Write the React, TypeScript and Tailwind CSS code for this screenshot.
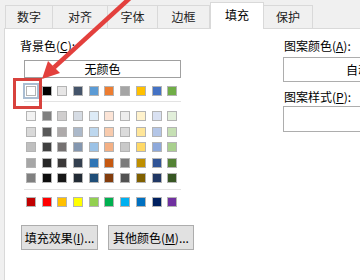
import React from "react";

const font = "font-['Microsoft_YaHei','Noto_Sans_CJK_SC',sans-serif]";

const theme = ["#ffffff", "#000000", "#e7e6e6", "#44546a", "#5b9bd5", "#ed7d31", "#a5a5a5", "#ffc000", "#4472c4", "#70ad47"];

const tints = [
  ["#f2f2f2", "#7f7f7f", "#d0cece", "#d6dce4", "#ddebf7", "#fce4d6", "#ededed", "#fff2cc", "#d9e1f2", "#e2efda"],
  ["#d9d9d9", "#595959", "#aeaaaa", "#acb9ca", "#bdd7ee", "#f8cbad", "#dbdbdb", "#ffe699", "#b4c6e7", "#c6e0b4"],
  ["#bfbfbf", "#404040", "#757171", "#8497b0", "#9bc2e6", "#f4b084", "#c9c9c9", "#ffd966", "#8ea9db", "#a9d08e"],
  ["#a6a6a6", "#262626", "#3a3838", "#333f4f", "#2f75b5", "#c65911", "#7b7b7b", "#bf8f00", "#305496", "#548235"],
  ["#808080", "#0d0d0d", "#161616", "#222b35", "#1f4e78", "#833c0c", "#525252", "#806000", "#203764", "#375623"],
];

const standard = ["#c00000", "#ff0000", "#ffc000", "#ffff00", "#92d050", "#00b050", "#00b0f0", "#0070c0", "#002060", "#7030a0"];

const tabs = [
  { label: "数字", w: "w-[48px]" },
  { label: "对齐", w: "w-[55px]" },
  { label: "字体", w: "w-[50px]" },
  { label: "边框", w: "w-[52px]" },
  { label: "填充", w: "w-[54px]", active: true },
  { label: "保护", w: "w-[49px]" },
];

function Swatch({ color, selected }: { color: string; selected?: boolean }) {
  return (
    <div
      className={
        "h-[10px] w-[10px] border border-[#b4b4b4] " +
        (selected ? "shadow-[0_0_0_1px_#ffffff,0_0_0_3px_#aabdd2]" : "")
      }
      style={{ backgroundColor: color }}
    />
  );
}

function SwatchRow({ colors, first }: { colors: string[]; first?: boolean }) {
  return (
    <div className="grid grid-cols-[repeat(10,10px)] gap-x-[5.7px]">
      {colors.map((c, i) => (
        <Swatch key={c + i} color={c} selected={first && i === 0} />
      ))}
    </div>
  );
}

function Btn({ children }: { children: React.ReactNode }) {
  return (
    <div className="flex h-[25px] items-center justify-center border border-[#adadad] bg-[#e1e1e1] text-[12px] text-black">
      {children}
    </div>
  );
}

export default function App() {
  return (
    <div className={"relative h-[280px] w-[360px] overflow-hidden bg-[#f0f0f0] " + font}>
      {/* tabs */}
      <div className="flex h-[28px] items-end pl-[5px]">
        {tabs.map((t) =>
          t.active ? (
            <div
              key={t.label}
              className={
                t.w +
                " relative z-10 -mb-px flex h-[27px] items-center justify-center border border-b-0 border-[#d9d9d9] bg-white pb-[2px] text-[12px] text-black"
              }
            >
              {t.label}
            </div>
          ) : (
            <div
              key={t.label}
              className={
                t.w +
                " flex h-[23px] items-center justify-center border-t border-r border-[#d9d9d9] bg-[#f0f0f0] text-[12px] text-[#222] first:border-l"
              }
            >
              {t.label}
            </div>
          ),
        )}
      </div>

      {/* panel */}
      <div className="ml-[4px] flex h-[260px] border-t border-l border-[#d9d9d9] bg-white pl-[15px]">
        <div className="flex w-[170px] flex-col pt-[9px]">
          <div className="h-[16px] text-[12px] leading-[16px] text-black">
            背景色(<span className="underline">C</span>):
          </div>
          <div className="mt-[6px] ml-[4px] flex h-[18px] w-[157px] items-center justify-center border border-[#a0a0a0] text-[12px] text-black">
            无颜色
          </div>
          <div className="mt-[8px] ml-[6px]">
            <SwatchRow colors={theme} first />
          </div>
          <div className="mt-[5px] ml-[4px] h-px w-[157px] bg-[#e3e3e3]" />
          <div className="mt-[9px] ml-[6px] flex flex-col gap-y-[5.6px]">
            {tints.map((row, i) => (
              <SwatchRow key={i} colors={row} />
            ))}
          </div>
          <div className="mt-[6px] ml-[4px] h-px w-[157px] bg-[#e3e3e3]" />
          <div className="mt-[7px] ml-[6px]">
            <SwatchRow colors={standard} />
          </div>
          <div className="mt-[18px] ml-[1px] flex gap-[10px]">
            <div className="w-[77px] shrink-0">
              <Btn>
                填充效果(<span className="underline">I</span>)...
              </Btn>
            </div>
            <div className="w-[86px] shrink-0">
              <Btn>
                其他颜色(<span className="underline">M</span>)...
              </Btn>
            </div>
          </div>
        </div>

        <div className="ml-[93px] flex flex-1 flex-col pt-[9px]">
          <div className="ml-[1px] h-[16px] text-[12px] leading-[16px] text-black">
            图案颜色(<span className="underline">A</span>):
          </div>
          <div className="mt-[3px] flex h-[25px] w-[120px] items-center border border-[#adadad] pl-[62px] text-[12px] text-black">
            自动
          </div>
          <div className="mt-[7px] ml-[1px] h-[16px] text-[12px] leading-[16px] text-black">
            图案样式(<span className="underline">P</span>):
          </div>
          <div className="mt-[1px] h-[26px] w-[120px] border border-[#adadad]" />
        </div>
      </div>

      {/* red annotation */}
      <div className="pointer-events-none absolute left-[13px] top-[78px] h-[31px] w-[29px] border-[3px] border-[#d8423d]" />
      <svg className="pointer-events-none absolute left-0 top-0" width="360" height="280">
        <line x1="130" y1="-2" x2="54" y2="67.5" stroke="#e3403d" strokeWidth="4.5" />
        <polygon points="42,79 48,61 60,73" fill="#e3403d" />
      </svg>
    </div>
  );
}
